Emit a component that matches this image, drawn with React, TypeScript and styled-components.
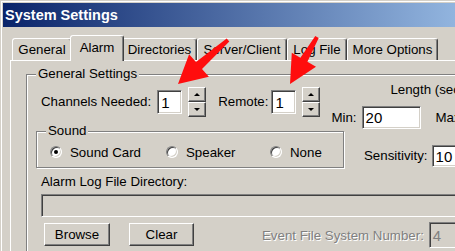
import React from 'react';
import styled, { createGlobalStyle } from 'styled-components';

const GlobalStyle = createGlobalStyle`
  html, body {
    margin: 0;
    padding: 0;
    overflow: hidden;
    background: #d4d0c8;
  }
  body {
    font-family: 'Liberation Sans', Arial, sans-serif;
    font-size: 13.3px;
    color: #000;
  }
`;

const Window = styled.div`
  position: relative;
  width: 520px;
  height: 300px;
  padding: 3px 0 0 3px;
  background: #d4d0c8;
  box-shadow: inset 1px 1px 0 #d4d0c8, inset 2px 2px 0 #fff;
`;

const TitleBar = styled.div`
  height: 24px;
  display: flex;
  align-items: center;
  padding-left: 2px;
  background: linear-gradient(to right, #0a246a, #a6caf0);
  color: #fff;
  font-weight: bold;
  font-size: 14.5px;
`;

const TabStrip = styled.div`
  display: flex;
  align-items: flex-end;
  height: 25px;
  margin: 8px 0 0 9px;
  position: relative;
  z-index: 1;
`;

const Tab = styled.div<{ $w: number; $active?: boolean }>`
  box-sizing: border-box;
  flex: none;
  width: ${p => (p.$active ? p.$w + 4 : p.$w)}px;
  height: ${p => (p.$active ? 26 : 22)}px;
  margin: 0 ${p => (p.$active ? -2 : 0)}px ${p => (p.$active ? -1 : 0)}px;
  padding-bottom: ${p => (p.$active ? 3 : 0)}px;
  display: flex;
  align-items: center;
  justify-content: center;
  white-space: nowrap;
  background: #d4d0c8;
  border: 1px solid;
  border-bottom: none;
  border-color: #fff #404040 transparent #fff;
  border-radius: 3px 3px 0 0;
  box-shadow: inset -1px 0 0 #808080;
  position: relative;
  z-index: ${p => (p.$active ? 2 : 1)};
`;

const Panel = styled.div`
  margin-left: 7px;
  height: 240px;
  border-top: 1px solid #fff;
  border-left: 1px solid #fff;
`;

const Group = styled.div`
  position: relative;
  box-sizing: border-box;
  width: 600px;
  height: 220px;
  margin: 13px 0 0 15px;
  padding: 7px 0 0 14px;
  border: 1px solid #808080;
  box-shadow: inset 1px 1px 0 #fff;
`;

const Caption = styled.span<{ $left: number }>`
  position: absolute;
  top: -9px;
  left: ${p => p.$left}px;
  padding: 0 2px;
  line-height: 16px;
  background: #d4d0c8;
`;

const Row = styled.div<{ $top?: number; $h?: number; $align?: string }>`
  display: flex;
  align-items: ${p => p.$align ?? 'flex-start'};
  margin-top: ${p => p.$top ?? 0}px;
  ${p => (p.$h ? `height: ${p.$h}px;` : '')}
`;

const Label = styled.span<{ $ml?: number; $disabled?: boolean }>`
  flex: none;
  white-space: nowrap;
  line-height: 16px;
  margin-left: ${p => p.$ml ?? 0}px;
  color: ${p => (p.$disabled ? '#808080' : '#000')};
  text-shadow: ${p => (p.$disabled ? '1px 1px 0 #fff' : 'none')};
`;

const Field = styled.div<{ $w: number; $h?: number; $ml?: number; $disabled?: boolean }>`
  box-sizing: border-box;
  flex: none;
  width: ${p => p.$w}px;
  height: ${p => p.$h ?? 23}px;
  margin-left: ${p => p.$ml ?? 0}px;
  padding-left: 3px;
  display: flex;
  align-items: center;
  font-size: 15px;
  background: ${p => (p.$disabled ? '#d4d0c8' : '#fff')};
  color: ${p => (p.$disabled ? '#808080' : '#000')};
  border: 1px solid;
  border-color: #808080 #fff #fff #808080;
  box-shadow: inset 1px 1px 0 #404040, inset -1px -1px 0 #d4d0c8;
`;

const Spin = styled.div`
  flex: none;
  display: flex;
  flex-direction: column;
  margin-left: 6px;
`;

const SpinButton = styled.div`
  box-sizing: border-box;
  width: 18px;
  height: 15px;
  display: flex;
  align-items: center;
  justify-content: center;
  background: #d4d0c8;
  border: 1px solid;
  border-color: #fff #404040 #404040 #fff;
  box-shadow: inset -1px -1px 0 #808080;
`;

const SpinArrow = styled.span<{ $down?: boolean }>`
  width: 0;
  height: 0;
  border-left: 3px solid transparent;
  border-right: 3px solid transparent;
  ${p => (p.$down ? 'border-top: 3px solid #000;' : 'border-bottom: 3px solid #000;')}
`;

const SpinPair = styled.div<{ $ml?: number }>`
  display: flex;
  align-items: center;
  height: 30px;
  margin: 5px 0 0 ${p => p.$ml ?? 0}px;
`;

const LengthBlock = styled.div`
  flex: none;
  display: flex;
  flex-direction: column;
  margin-left: 11px;
`;

const Frame = styled.div`
  position: relative;
  box-sizing: border-box;
  flex: none;
  width: 308px;
  height: 37px;
  margin-left: -5px;
  padding: 12px 0 0 13px;
  border: 1px solid #808080;
  box-shadow: inset 1px 1px 0 #fff, 1px 1px 0 #fff;
  display: flex;
  align-items: flex-start;
`;

const Option = styled.label<{ $w?: number }>`
  display: flex;
  align-items: center;
  height: 16px;
  flex: none;
  ${p => (p.$w ? `width: ${p.$w}px;` : '')}
`;

const Radio = styled.span<{ $checked?: boolean }>`
  box-sizing: border-box;
  position: relative;
  width: 12px;
  height: 12px;
  margin-right: 8px;
  border-radius: 50%;
  background: #fff;
  border: 1px solid;
  border-color: #808080 #fff #fff #808080;
  box-shadow: inset 1px 1px 0 #404040, inset -1px -1px 0 #d4d0c8;
  &::after {
    content: '';
    display: ${p => (p.$checked ? 'block' : 'none')};
    position: absolute;
    left: 3px;
    top: 3px;
    width: 4px;
    height: 4px;
    border-radius: 50%;
    background: #000;
  }
`;

const Button = styled.div<{ $w: number; $ml: number }>`
  box-sizing: border-box;
  flex: none;
  width: ${p => p.$w}px;
  height: 23px;
  margin: 1px 0 0 ${p => p.$ml}px;
  display: flex;
  align-items: center;
  justify-content: center;
  background: #d4d0c8;
  border: 1px solid;
  border-color: #fff #404040 #404040 #fff;
  box-shadow: inset -1px -1px 0 #808080;
`;

const Arrows = styled.svg`
  position: absolute;
  top: 0;
  left: 0;
  width: 455px;
  height: 251px;
  pointer-events: none;
  z-index: 10;
`;

const tabs = [
  { label: 'General', w: 60 },
  { label: 'Alarm', w: 50, active: true },
  { label: 'Directories', w: 75 },
  { label: 'Server/Client', w: 90 },
  { label: 'Log File', w: 60 },
  { label: 'More Options', w: 91 },
];

const SpinField = ({ label, ml, labelMl, value }: { label: string; ml?: number; labelMl: number; value: string }) => (
  <SpinPair $ml={ml}>
    <Label>{label}</Label>
    <Field $w={25} $h={24} $ml={labelMl}>{value}</Field>
    <Spin>
      <SpinButton><SpinArrow /></SpinButton>
      <SpinButton><SpinArrow $down /></SpinButton>
    </Spin>
  </SpinPair>
);

export default function App() {
  return (
    <>
      <GlobalStyle />
      <Window>
        <TitleBar>System Settings</TitleBar>
        <TabStrip>
          {tabs.map(t => (
            <Tab key={t.label} $w={t.w} $active={t.active}>{t.label}</Tab>
          ))}
        </TabStrip>
        <Panel>
          <Group>
            <Caption $left={9}>General Settings</Caption>
            <Row $h={47}>
              <SpinField label="Channels Needed:" labelMl={6} value="1" />
              <SpinField label="Remote:" ml={12} labelMl={3} value="1" />
              <LengthBlock>
                <Label $ml={59}>Length (seconds)</Label>
                <Row $top={8} $align="center">
                  <Label>Min:</Label>
                  <Field $w={59} $ml={5}>20</Field>
                  <Label $ml={15}>Max:</Label>
                  <Field $w={59} $ml={5}>60</Field>
                </Row>
              </LengthBlock>
            </Row>
            <Row $top={2}>
              <Frame>
                <Caption $left={9}>Sound</Caption>
                <Option $w={116}><Radio $checked />Sound Card</Option>
                <Option $w={104}><Radio />Speaker</Option>
                <Option><Radio />None</Option>
              </Frame>
              <Row $top={14} $align="center">
                <Label $ml={20}>Sensitivity:</Label>
                <Field $w={60} $h={22} $ml={4}>10</Field>
              </Row>
            </Row>
            <Row $top={6}>
              <Label>Alarm Log File Directory:</Label>
            </Row>
            <Row $top={4}>
              <Field $w={470} $disabled />
            </Row>
            <Row $top={5}>
              <Button $w={66} $ml={3}>Browse</Button>
              <Button $w={65} $ml={19}>Clear</Button>
              <Row $top={6}>
                <Label $ml={68} $disabled>Event File System Number:</Label>
              </Row>
              <Field $w={40} $h={26} $ml={5} $disabled>4</Field>
            </Row>
          </Group>
        </Panel>
        <Arrows viewBox="0 0 455 251">
          <polygon
            fill="#ff0d0d"
            points="178,84 208.9,76.8 202,68.9 229.3,41.5 226.7,38.5 196,62.1 189.1,54.2"
          />
          <polygon
            fill="#ff0d0d"
            points="290,84 316,66.7 307.4,61.7 318.7,38 315.3,36 300.4,57.7 291.8,52.7"
          />
        </Arrows>
      </Window>
    </>
  );
}
